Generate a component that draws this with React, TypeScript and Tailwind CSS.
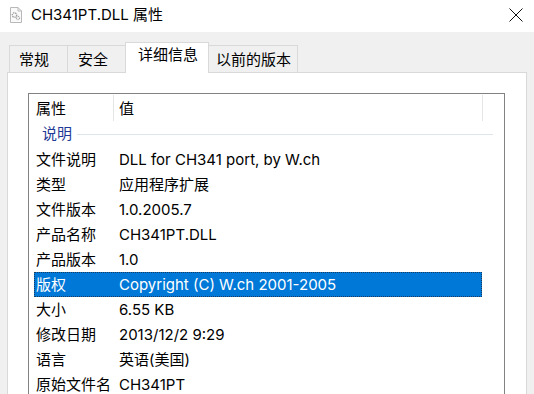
import React from 'react';

const font = { fontFamily: "Inter, 'Noto Sans CJK SC', sans-serif" };

const rows: [string, string][] = [
  ['文件说明', 'DLL for CH341 port, by W.ch'],
  ['类型', '应用程序扩展'],
  ['文件版本', '1.0.2005.7'],
  ['产品名称', 'CH341PT.DLL'],
  ['产品版本', '1.0'],
  ['版权', 'Copyright (C) W.ch 2001-2005'],
  ['大小', '6.55 KB'],
  ['修改日期', '2013/12/2 9:29'],
  ['语言', '英语(美国)'],
  ['原始文件名', 'CH341PT'],
];

const tabs = [
  { label: '常规', cls: 'w-[59px] pl-[9px]' },
  { label: '安全', cls: 'w-[59px] pl-[10px]' },
  { label: '详细信息', cls: 'w-[84px] pl-[12px]', active: true },
  { label: '以前的版本', cls: 'w-[90px] pl-[7px]' },
];

const FileIcon = () => (
  <svg width="14" height="16" viewBox="0 0 14 16">
    <path d="M1.5 0.5 H9 L12.5 4 V15.5 H1.5 Z" fill="#fafafa" stroke="#b8b8b8" />
    <path d="M9 0.5 V4 H12.5" fill="none" stroke="#b8b8b8" />
    <circle cx="5.5" cy="8" r="2.2" fill="none" stroke="#9a9a9a" strokeWidth="1.4" strokeDasharray="1.2 0.8" />
    <circle cx="9" cy="11" r="1.6" fill="none" stroke="#a8a8a8" strokeWidth="1.2" strokeDasharray="1 0.7" />
  </svg>
);

export default function App() {
  return (
    <div style={font} className="w-[534px] h-[394px] overflow-hidden bg-[#f0f0f0] text-[15px] text-black">
      {/* title bar */}
      <div className="h-[32px] bg-white flex items-center pl-[9px] pr-[11px] pb-[3px]">
        <FileIcon />
        <span className="ml-[8px] leading-none">CH341PT.DLL 属性</span>
        <svg className="ml-auto" width="14" height="14" viewBox="0 0 14 14">
          <path d="M0.5 0.5 L13.5 13.5 M13.5 0.5 L0.5 13.5" stroke="#111" strokeWidth="1" />
        </svg>
      </div>

      {/* tabs */}
      <div className="pl-[9px] pt-[10px] flex items-end relative z-10">
        {tabs.map((t) =>
          t.active ? (
            <div
              key={t.label}
              className={`${t.cls} h-[31px] -mb-[1px] -ml-[1px] bg-white border border-b-0 border-[#d9d9d9] flex items-start pt-[1px]`}
            >
              {t.label}
            </div>
          ) : (
            <div
              key={t.label}
              className={`${t.cls} h-[27px] bg-[#f0f0f0] border border-b-0 border-[#d9d9d9] -ml-[1px] first:ml-0 flex items-center pt-[2px]`}
            >
              {t.label}
            </div>
          )
        )}
      </div>

      {/* panel */}
      <div className="ml-[7px] w-[520px] h-[330px] bg-white border border-[#d9d9d9] pt-[20px] pl-[20px]">
        <div className="w-[477px] h-[320px] border border-[#828282] pl-[5px]">
          {/* header */}
          <div className="h-[28px] flex">
            <div className="w-[79px] pl-[2px] pt-[2px] flex items-center">属性</div>
            <div className="w-[1px] mt-[1px] h-[26px] bg-[#e5e5e5]" />
            <div className="w-[368px] pl-[5px] pt-[2px] flex items-center">值</div>
            <div className="w-[1px] mt-[1px] h-[26px] bg-[#e5e5e5]" />
          </div>
          {/* group */}
          <div className="h-[25px] flex items-center pl-[8px]">
            <span className="text-[#1e3a96]">说明</span>
            <div className="ml-[5px] w-[416px] h-[1px] bg-[#dde4ea]" />
          </div>
          {rows.map(([k, v]) => {
            const sel = k === '版权';
            return (
              <div
                key={k}
                className={`w-[448px] h-[25px] pt-[2px] flex items-center whitespace-nowrap ${
                  sel ? 'bg-[#0078d7] text-white border border-dotted border-[#1a3d60]' : 'border border-transparent'
                }`}
              >
                <div className="w-[84px] pl-[1px]">{k}</div>
                <div>{v}</div>
              </div>
            );
          })}
        </div>
      </div>
    </div>
  );
}
